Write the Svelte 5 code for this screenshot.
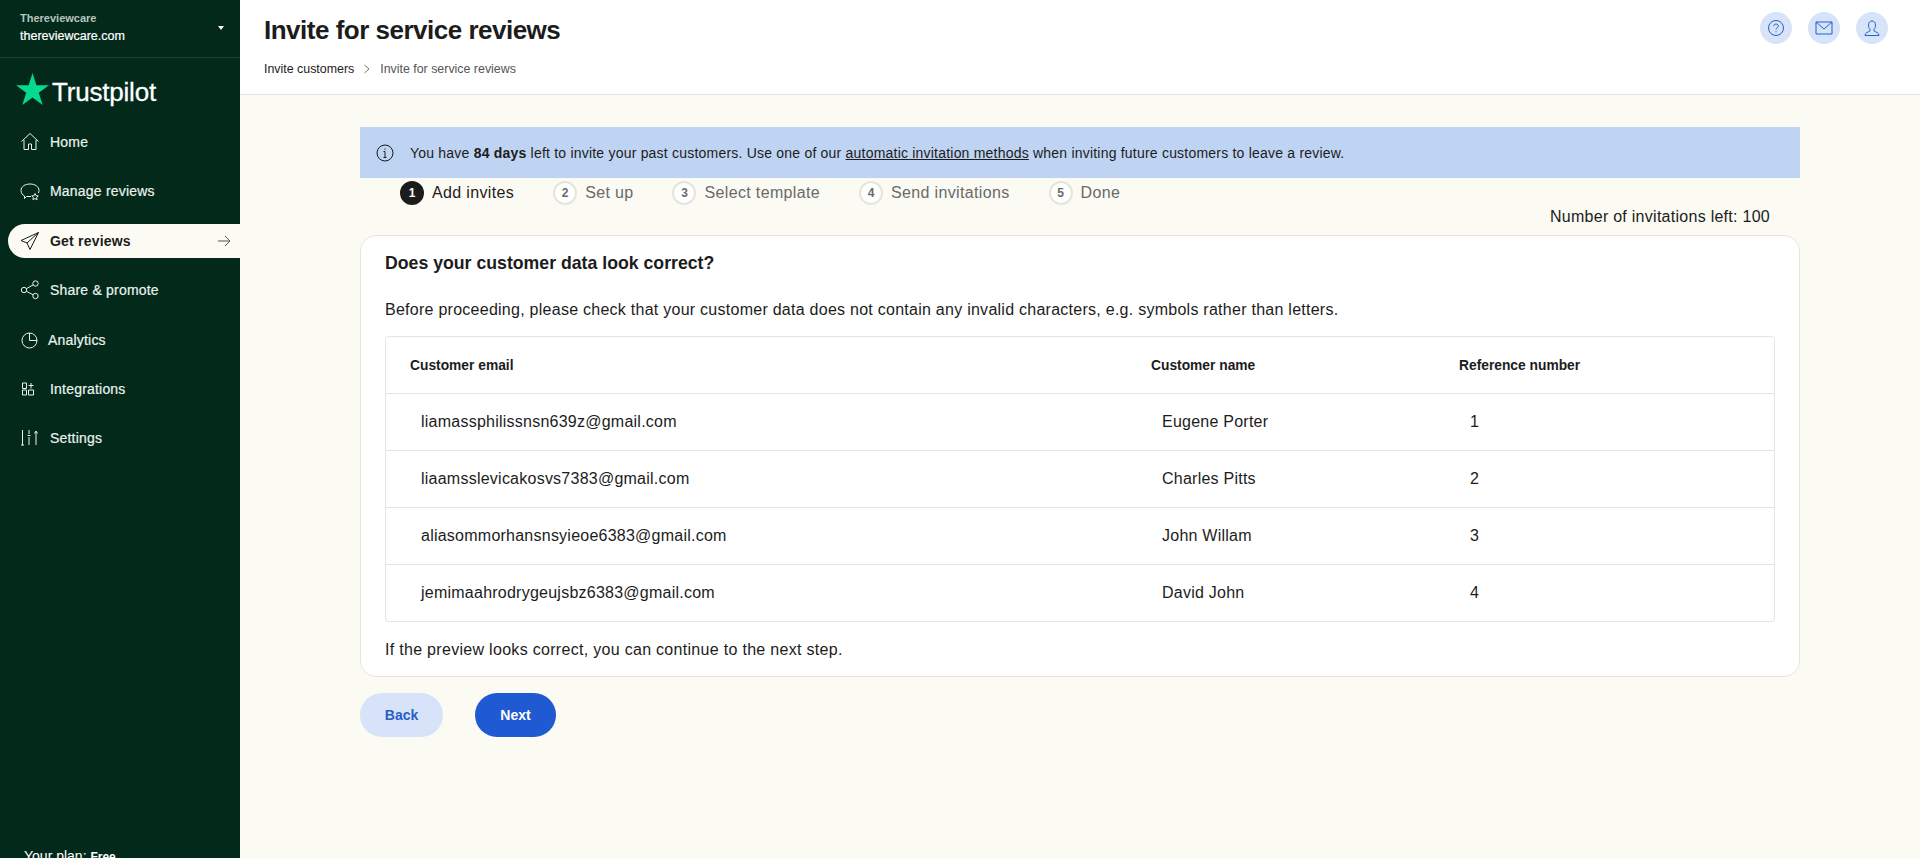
<script>
  const nav = [
    { label: 'Home', icon: 'home' },
    { label: 'Manage reviews', icon: 'chat' },
    { label: 'Get reviews', icon: 'send', active: true },
    { label: 'Share & promote', icon: 'share' },
    { label: 'Analytics', icon: 'pie' },
    { label: 'Integrations', icon: 'apps' },
    { label: 'Settings', icon: 'sliders' }
  ];

  const steps = ['Add invites', 'Set up', 'Select template', 'Send invitations', 'Done'];

  const rows = [
    ['liamassphilissnsn639z@gmail.com', 'Eugene Porter', '1'],
    ['liaamsslevicakosvs7383@gmail.com', 'Charles Pitts', '2'],
    ['aliasommorhansnsyieoe6383@gmail.com', 'John Willam', '3'],
    ['jemimaahrodrygeujsbz6383@gmail.com', 'David John', '4']
  ];
</script>

<div class="app">
  <aside class="sidebar">
    <div class="account">
      <div>
        <div class="company">Thereviewcare</div>
        <div class="domain">thereviewcare.com</div>
      </div>
      <span class="caret"></span>
    </div>

    <div class="logo">
      <svg width="33" height="32" viewBox="0 0 34 33"><path fill="#04da8d" d="M17 0l4 12.600h13l-10.500 7.800 4 12.600L17 25.200 6.500 33l4-12.600L0 12.600h13z" /></svg>
      <span>Trustpilot</span>
    </div>

    <nav>
      {#each nav as item}
        <div class="nav_item" class:active={item.active}>
          <svg class="nav_icon" class:pie={item.icon === 'pie'} width="20" height="20" viewBox="0 0 20 20" fill="none" stroke="currentColor" stroke-width="1">
            {#if item.icon === 'home'}
              <path d="M1.500 9.500L10 1.500l8.500 8M4 8v9.500h4.500V12h3v5.500H16V8" />
            {:else if item.icon === 'chat'}
              <path d="M11 15.500H6.500l-2 2v-2.500C2.500 14 1 12 1 9.500 1 5.500 5 3 10 3s9 2.500 9 6.500c0 1-.2 1.800-.7 2.600" />
              <path d="M15 12.500l1 2.200 2.300.2-1.700 1.500.5 2.300-2.100-1.200-2.100 1.200.5-2.300-1.700-1.500 2.300-.2z" />
            {:else if item.icon === 'send'}
              <path d="M18.500 1.500L1 9.500l6 2.500 3 6.500zM7 12L18.500 1.500" />
            {:else if item.icon === 'share'}
              <circle cx="4" cy="10" r="2.700" /><circle cx="15.500" cy="3.500" r="2.700" /><circle cx="15.500" cy="16" r="2.700" />
              <path d="M6.400 8.700l6.800-3.900M6.400 11.300l6.800 3.500" />
            {:else if item.icon === 'pie'}
              <circle cx="9.500" cy="10.500" r="7.500" /><path d="M9.500 3v7.500H17" />
            {:else if item.icon === 'apps'}
              <path d="M2.500 4h4v5.500h-4zM2.500 11h4v5h-4zM8.500 11h5v5h-5zM11 4v5.500M8.500 6.500h5" />
            {:else}
              <path d="M2.500 2v15M1 17h3M9 2v4M9 9v8M7.500 7.500h3M16 4v13M14.500 5.500L16 3l1.500 2.500" />
            {/if}
          </svg>
          <span>{item.label}</span>
          {#if item.active}
            <svg class="arrow" width="14" height="12" viewBox="0 0 14 12" fill="none" stroke="#555" stroke-width="1"><path d="M1 6h12M8 1l5 5-5 5" /></svg>
          {/if}
        </div>
      {/each}
    </nav>

    <div class="plan">Your plan: <span>Free</span></div>
  </aside>

  <div class="main">
    <header>
      <div>
        <h1>Invite for service reviews</h1>
        <div class="crumbs">
          <span class="crumb_first">Invite customers</span>
          <svg width="8" height="10" viewBox="0 0 8 10" fill="none" stroke="#777" stroke-width="1"><path d="M1.500 1l4.500 4-4.500 4" /></svg>
          <span>Invite for service reviews</span>
        </div>
      </div>
      <div class="header_icons">
        <div class="round">
          <svg width="18" height="18" viewBox="0 0 18 18" fill="none" stroke="currentColor"><circle cx="9" cy="9" r="7.500" /><path d="M6.800 7.200C6.800 5.800 7.800 5 9 5s2.300.8 2.300 2.100c0 1.700-2.300 1.700-2.300 3.500M9 12.200v1" /></svg>
        </div>
        <div class="round">
          <svg width="18" height="14" viewBox="0 0 18 14" fill="none" stroke="currentColor"><path d="M1 1h16v12H1zM1 1l8 7 8-7" /></svg>
        </div>
        <div class="round">
          <svg width="18" height="18" viewBox="0 0 18 18" fill="none" stroke="currentColor"><path d="M2 16.500h14c0-3-3.500-3.500-5-4.500v-1.500c1-1 1.500-2.500 1.500-4.500 0-2.500-1.500-4-3.500-4S5.500 3.500 5.500 6c0 2 .5 3.500 1.500 4.500V12c-1.500 1-5 1.500-5 4.500z" /></svg>
        </div>
      </div>
    </header>

    <div class="content">
      <div class="banner">
        <svg width="18" height="18" viewBox="0 0 18 18" fill="none" stroke="#1c1c1c"><circle cx="9" cy="9" r="8" /><path d="M9 7.500v6M7.500 13.500h3M7.500 7.500H9M9 4.500v1.200" /></svg>
        <p>You have <b>84 days</b> left to invite your past customers. Use one of our <u>automatic invitation methods</u> when inviting future customers to leave a review.</p>
      </div>

      <div class="steps">
        {#each steps as step, i}
          <div class="step" class:current={i === 0}>
            <span class="step_num">{i + 1}</span>
            <span>{step}</span>
          </div>
        {/each}
      </div>

      <div class="left_count">Number of invitations left: 100</div>

      <section class="card">
        <h2>Does your customer data look correct?</h2>
        <p class="lead">Before proceeding, please check that your customer data does not contain any invalid characters, e.g. symbols rather than letters.</p>

        <div class="table">
          <div class="row head">
            <div>Customer email</div>
            <div>Customer name</div>
            <div>Reference number</div>
          </div>
          {#each rows as row}
            <div class="row">
              {#each row as cell}
                <div>{cell}</div>
              {/each}
            </div>
          {/each}
        </div>

        <p class="foot">If the preview looks correct, you can continue to the next step.</p>
      </section>

      <div class="buttons">
        <button class="back">Back</button>
        <button class="next">Next</button>
      </div>
    </div>
  </div>
</div>

<style>
  :global(body) {
    margin: 0;
    background: #fbfaf3;
  }

  .app {
    display: flex;
    height: 858px;
    overflow: hidden;
    font-family: "Liberation Sans", Arial, sans-serif;
    color: #1c1c1c;
  }

  .sidebar {
    position: relative;
    flex: 0 0 240px;
    background: #03291b;
    color: #fff;
    overflow: hidden;
  }

  .account {
    height: 58px;
    padding: 11px 12px 0 20px;
    box-sizing: border-box;
    display: flex;
    justify-content: space-between;
    border-bottom: 1px solid #1c4334;
  }

  .company {
    font-size: 11px;
    font-weight: 700;
    color: #b7c5bf;
    line-height: 15px;
  }

  .domain {
    font-size: 12.500px;
    line-height: 20px;
    -webkit-text-stroke: 0.2px #fff;
  }

  .caret {
    width: 0;
    height: 0;
    margin-top: 15px;
    margin-right: 4px;
    border-left: 3px solid transparent;
    border-right: 3px solid transparent;
    border-top: 4px solid #fff;
  }

  .logo {
    display: flex;
    align-items: center;
    gap: 3px;
    height: 36px;
    margin: 13px 0 0 16px;
    font-size: 26px;
    letter-spacing: -0.2px;
    -webkit-text-stroke: 0.3px #fff;
  }

  .logo span {
    padding-top: 7px;
  }

  nav {
    margin-top: 18px;
  }

  .nav_item {
    height: 34px;
    margin-bottom: 15.400px;
    margin-left: 8px;
    padding-left: 12px;
    display: flex;
    align-items: center;
    gap: 10px;
    font-size: 14px;
    letter-spacing: 0.2px;
    color: #eaf3ee;
    -webkit-text-stroke: 0.2px #eaf3ee;
    border-radius: 17px 0 0 17px;
  }

  .nav_item.active {
    background: #fbfaf3;
    color: #1c1c1c;
    font-weight: 700;
    -webkit-text-stroke: 0;
  }

  .nav_icon {
    flex: none;
  }

  .nav_icon.pie {
    margin-right: -2px;
  }

  .arrow {
    margin-left: auto;
    margin-right: 9px;
  }

  .plan {
    position: absolute;
    left: 24px;
    top: 848px;
    font-size: 14px;
  }

  .plan span {
    font-size: 12px;
    font-weight: 700;
  }

  .main {
    flex: 1;
    min-width: 0;
  }

  header {
    height: 95px;
    box-sizing: border-box;
    padding: 15px 32px 0 24px;
    background: #fff;
    border-bottom: 1px solid #e5e5dd;
    display: flex;
    justify-content: space-between;
  }

  h1 {
    margin: 0;
    font-size: 26px;
    line-height: 30px;
    font-weight: 700;
    letter-spacing: -0.5px;
  }

  .crumbs {
    margin-top: 17px;
    display: flex;
    align-items: center;
    gap: 9px;
    font-size: 12.400px;
    color: #555;
  }

  .crumb_first {
    color: #1c1c1c;
  }

  .header_icons {
    display: flex;
    gap: 16px;
    margin-top: -3px;
  }

  .round {
    width: 32px;
    height: 32px;
    border-radius: 50%;
    background: #d6e3f8;
    color: #2b5fc7;
    display: flex;
    align-items: center;
    justify-content: center;
  }

  .content {
    width: 1440px;
    margin-left: 120px;
    padding-top: 32px;
  }

  .banner {
    height: 51px;
    padding-left: 16px;
    display: flex;
    align-items: center;
    gap: 16px;
    background: #bfd4f2;
    font-size: 14px;
    letter-spacing: 0.21px;
  }

  .banner p {
    margin: 0;
  }

  .steps {
    display: flex;
    gap: 39px;
    padding-left: 40px;
    height: 30px;
    align-items: center;
  }

  .step {
    display: flex;
    align-items: center;
    gap: 8px;
    font-size: 16px;
    letter-spacing: 0.35px;
    color: #696a6a;
  }

  .step.current {
    color: #1c1c1c;
  }

  .step_num {
    width: 20px;
    height: 20px;
    border: 2px solid #e5e5dd;
    border-radius: 50%;
    background: #fff;
    display: flex;
    align-items: center;
    justify-content: center;
    font-size: 12px;
    font-weight: 700;
    letter-spacing: 0;
  }

  .current .step_num {
    background: #1c1c1c;
    border-color: #1c1c1c;
    color: #fff;
  }

  .left_count {
    padding-right: 30px;
    text-align: right;
    font-size: 16px;
    letter-spacing: 0.27px;
    line-height: 18px;
  }

  .card {
    margin-top: 9px;
    height: 442px;
    box-sizing: border-box;
    padding: 16px 24px 0;
    background: #fff;
    border: 1px solid #e5e5dd;
    border-radius: 16px;
  }

  h2 {
    margin: 0;
    font-size: 17.700px;
    line-height: 22px;
  }

  .lead {
    margin: 26px 0 0;
    font-size: 16px;
    letter-spacing: 0.26px;
    line-height: 20px;
  }

  .table {
    margin-top: 16px;
    border: 1px solid #e5e5dd;
    border-radius: 4px;
  }

  .row {
    height: 57px;
    display: grid;
    grid-template-columns: 741px 308px 1fr;
    align-items: center;
    padding-left: 35px;
    font-size: 16px;
    letter-spacing: 0.24px;
    border-top: 1px solid #e5e5dd;
    box-sizing: border-box;
  }

  .row.head {
    padding-left: 24px;
    border-top: 0;
    font-size: 13.800px;
    font-weight: 700;
    letter-spacing: 0;
    height: 56px;
  }

  .foot {
    margin: 18px 0 0;
    font-size: 16px;
    letter-spacing: 0.3px;
    line-height: 20px;
  }

  .buttons {
    display: flex;
    gap: 32px;
    margin-top: 16px;
  }

  button {
    height: 44px;
    border: 0;
    border-radius: 22px;
    font: 700 14px "Liberation Sans", Arial, sans-serif;
  }

  .back {
    width: 83px;
    background: #d6e3f8;
    color: #2b5fc7;
  }

  .next {
    width: 81px;
    background: #1f5ad3;
    color: #fff;
  }
</style>
